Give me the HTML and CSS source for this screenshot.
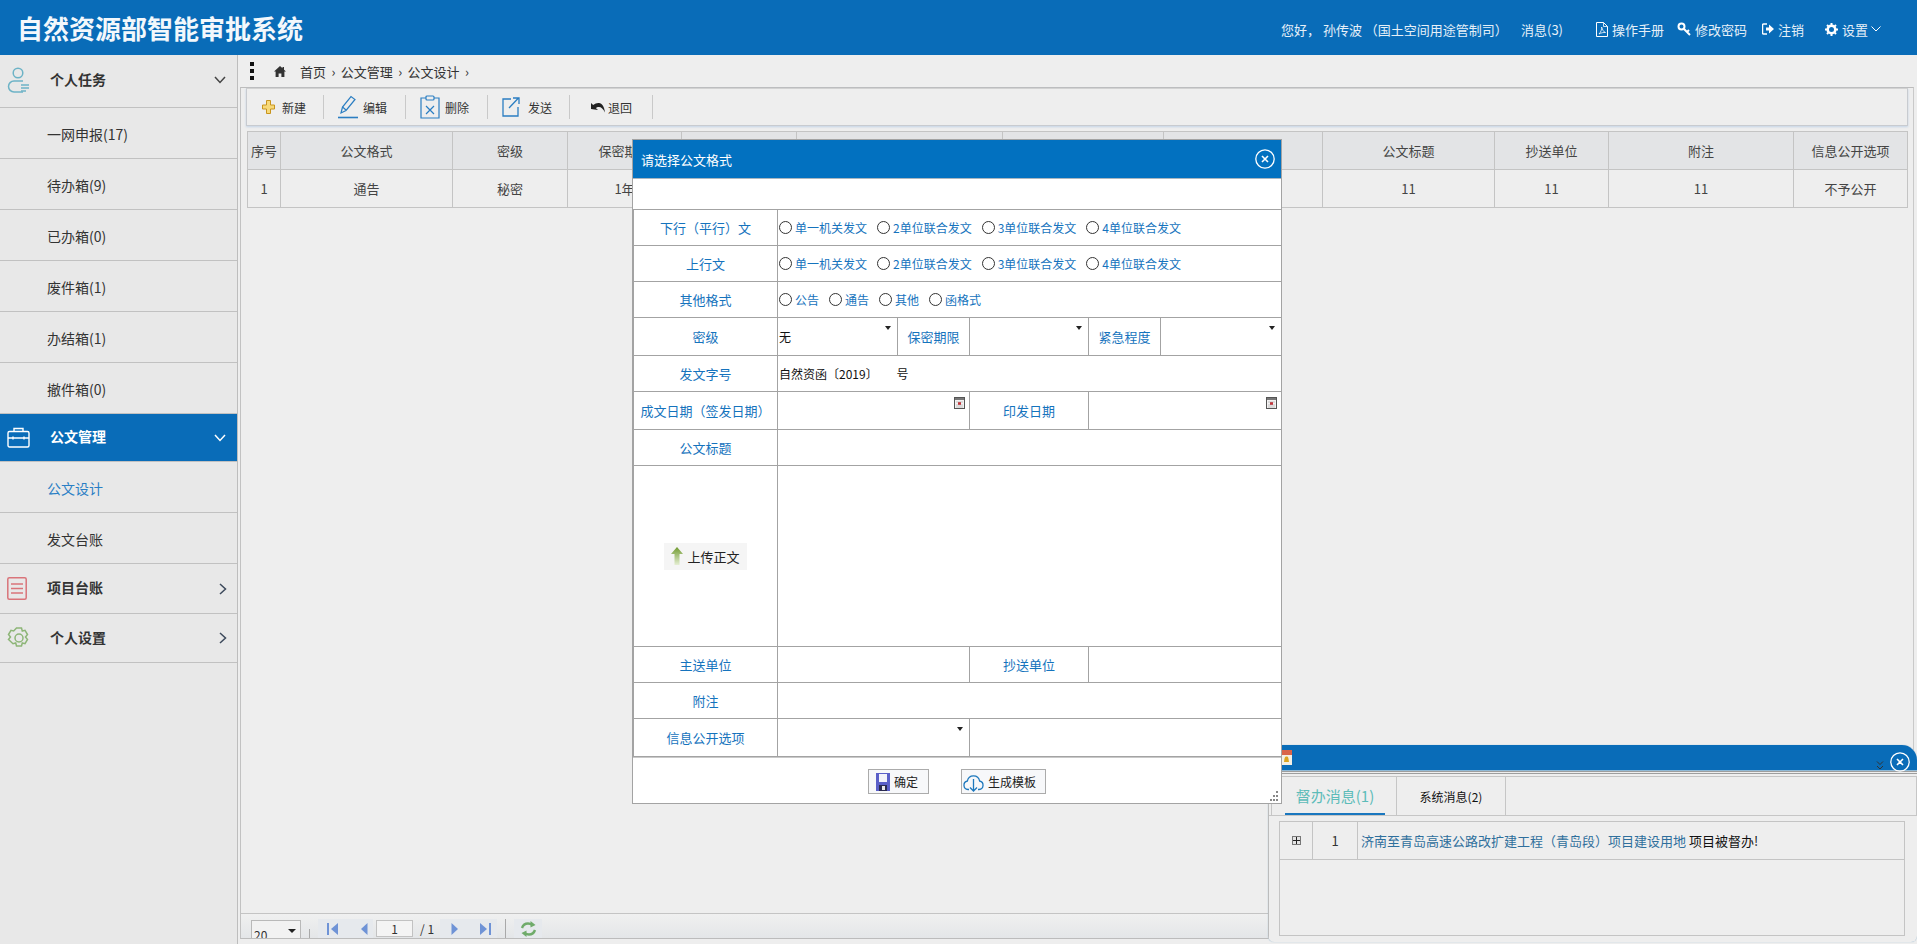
FILE: index.html
```html
<!DOCTYPE html>
<html lang="zh">
<head>
<meta charset="utf-8">
<title>自然资源部智能审批系统</title>
<link rel="stylesheet" href="styles.css">
</head>
<body>
<header class="top">
  <h1 class="brand">自然资源部智能审批系统</h1>
  <nav class="usernav">
    <span class="hello">您好， 孙传波 （国土空间用途管制司）</span>
    <span class="msg">消息(3)</span>
    <span class="nl nl-pdf"><svg width="12" height="15" viewBox="0 0 12 15" fill="none" stroke="#fff"><path d="M.5.5h7l4 4v10H.5z"/><path d="M7.5.5v4h4M3 12c2-2 3-5 2.6-7 1 3 2 5 3.900 5.500-2-.2-4.500.3-6.500 1.500z" stroke-width=".8"/></svg>操作手册</span>
    <span class="nl nl-key"><svg width="14" height="14" viewBox="0 0 14 14" fill="none" stroke="#fff" stroke-width="2"><circle cx="4.500" cy="4.500" r="3"/><path d="M7 7l6 6M10 10l2-2"/></svg>修改密码</span>
    <span class="nl nl-out"><svg width="12" height="12" viewBox="0 0 12 12"><path d="M5 1H1.500a1 1 0 0 0-1 1v8a1 1 0 0 0 1 1H5" fill="none" stroke="#fff" stroke-width="1.500"/><path d="M4 4.500h3V1.500L12 6l-5 4.500v-3H4z" fill="#fff"/></svg>注销</span>
    <span class="nl nl-set"><svg width="13" height="13" viewBox="0 0 13 13"><circle cx="6.500" cy="6.500" r="3.800" fill="none" stroke="#fff" stroke-width="2.600"/><path d="M6.500 0v13M0 6.500h13M2 2l9 9M11 2l-9 9" stroke="#fff" stroke-width="2" stroke-dasharray="2 9 2 0"/></svg>设置<svg class="caret" width="10" height="6" viewBox="0 0 10 6" fill="none" stroke="#fff"><path d="M.5.500L5 5l4.500-4.500"/></svg></span>
  </nav>
</header>

<div class="shell">
  <aside class="side">
    <div class="grp grp-first">
      <span class="gi"><svg width="24" height="26" viewBox="0 0 24 26" fill="none" stroke="#6db3c6" stroke-width="1.500"><circle cx="11" cy="6" r="4.800"/><path d="M16 14H7a5.500 5.500 0 0 0 0 11h9"/><path d="M14 18h8M14 21h8M14 24h5" stroke="#6db3c6"/></svg></span>
      <span class="gt">个人任务</span>
      <svg class="chev" width="12" height="8" viewBox="0 0 12 8" fill="none" stroke="#444" stroke-width="1.500"><path d="M1 1l5 5.500L11 1"/></svg>
    </div>
    <div class="sub">一网申报(17)</div>
    <div class="sub">待办箱(9)</div>
    <div class="sub">已办箱(0)</div>
    <div class="sub">废件箱(1)</div>
    <div class="sub">办结箱(1)</div>
    <div class="sub">撤件箱(0)</div>
    <div class="grp grp-on">
      <span class="gi"><svg width="23" height="21" viewBox="0 0 23 21" fill="none" stroke="#fff" stroke-width="1.400"><rect x="1" y="4.500" width="21" height="15.500" rx="1.500"/><path d="M7 4.500V1.500h9v3M1 11h21M6 9.500v3M17 9.500v3"/></svg></span>
      <span class="gt gt-shift">公文管理</span>
      <svg class="chev" width="12" height="8" viewBox="0 0 12 8" fill="none" stroke="#fff" stroke-width="1.500"><path d="M1 1l5 5.500L11 1"/></svg>
    </div>
    <div class="sub sub-on">公文设计</div>
    <div class="sub">发文台账</div>
    <div class="grp grp-s">
      <span class="gi"><svg width="20" height="23" viewBox="0 0 20 23" fill="none" stroke="#d9747a" stroke-width="1.500"><rect x=".8" y=".8" width="18.400" height="21.400" rx="1.500"/><path d="M4 7h12M4 11.500h12M4 16h12"/></svg></span>
      <span class="gt">项目台账</span>
      <svg class="chev-r" width="8" height="12" viewBox="0 0 8 12" fill="none" stroke="#3d4a5c" stroke-width="1.500"><path d="M1 1l5.500 5L1 11"/></svg>
    </div>
    <div class="grp grp-s2">
      <span class="gi"><svg width="24" height="22" viewBox="0 0 24 22" fill="none" stroke="#8db577" stroke-width="1.500"><circle cx="12" cy="11" r="4"/><path d="M9.500 1h5l.8 3 2.700-.7 2.500 4.200-2 2.500 2 2.500-2.500 4.200-2.700-.7-.8 3h-5l-.8-3-2.700.7L1.500 12.500l2-2.500-2-2.500L4 3.300l2.700.7z"/></svg></span>
      <span class="gt gt-shift">个人设置</span>
      <svg class="chev-r" width="8" height="12" viewBox="0 0 8 12" fill="none" stroke="#3d4a5c" stroke-width="1.500"><path d="M1 1l5.500 5L1 11"/></svg>
    </div>
  </aside>

  <main class="main">
    <div class="crumb">
      <span class="dots"><i></i><i></i><i></i></span>
      <svg class="home" width="12" height="11" viewBox="0 0 12 11"><path d="M6 0L0 5.500h1.600V11h3V7.500h2.800V11h3V5.500H12L10 3.700V1H8.500v1.300z" fill="#333"/></svg>
      <span class="path">首页 › 公文管理 › 公文设计 ›</span>
    </div>
    <section class="panel">
      <div class="tools">
        <span class="tb tb-new"><svg width="13" height="14" viewBox="0 0 13 14"><path d="M4.500.5h4v4.500H12.500v4H8.500v4.500h-4V9H.5V5h4z" fill="#f7d978" stroke="#c8941e"/></svg>新建</span>
        <span class="tb tb-edit"><svg width="20" height="24" viewBox="0 0 20 24" fill="none" stroke="#2b7ec2" stroke-width="1.200"><path d="M3 18l1.500-6L13 1.500l4 3L8 15.500z"/><path d="M4.500 12l3.500 3"/><path d="M0 22.500h20" stroke-width="1.600"/></svg>编辑</span>
        <span class="tb tb-del"><svg width="20" height="24" viewBox="0 0 20 24" fill="none" stroke="#2b7ec2" stroke-width="1.200"><path d="M6 3H1v20h18V3h-5"/><rect x="6" y="1" width="8" height="4" rx="1"/><path d="M6 11l8 8M14 11l-8 8"/></svg>删除</span>
        <span class="tb tb-send"><svg width="18" height="20" viewBox="0 0 18 20" fill="none" stroke="#2b7ec2" stroke-width="1.300"><path d="M9 2H1v17h15v-9"/><path d="M7 11l9-9.500M11 1h6v6"/></svg>发送</span>
        <span class="tb tb-back"><svg width="14" height="11" viewBox="0 0 14 11"><path d="M0 7V1l2.200 2C4 1.500 6 .8 8 1c3 .4 5 3 6 9.500C12.500 7 10 5 8 5c-1.500 0-2.500.5-3.200 1L7 8z" fill="#222"/></svg>退回</span>
      </div>
      <div class="grid-wrap">
        <table class="grid">
          <colgroup><col class="c1"><col class="c2"><col class="c3"><col class="c3b"><col class="c3"><col class="c6"><col class="c7"><col class="c8"><col class="c2"><col class="c3b"><col class="c11"><col class="c3b"></colgroup>
          <thead><tr><th>序号</th><th>公文格式</th><th>密级</th><th>保密期限</th><th>紧急程度</th><th>发文字号</th><th>成文日期</th><th>印发日期</th><th>公文标题</th><th>抄送单位</th><th>附注</th><th>信息公开选项</th></tr></thead>
          <tbody><tr><td>1</td><td>通告</td><td>秘密</td><td>1年</td><td></td><td></td><td></td><td></td><td>11</td><td>11</td><td>11</td><td>不予公开</td></tr></tbody>
        </table>
      </div>
      <div class="pager">
        <span class="psel"><span class="psel-v">20</span><i class="tri"></i></span>
        <span class="psep"></span>
        <span class="pgrp pgrp-a">
          <svg width="12" height="12" viewBox="0 0 12 12"><path d="M0 0h2v12H0z" fill="#6f93d6"/><path d="M11 0v12L4 6z" fill="#6f93d6"/></svg>
          <svg width="7" height="12" viewBox="0 0 7 12"><path d="M6.500 0v12L0 6z" fill="#6f93d6"/></svg>
        </span>
        <span class="pnum">1</span>
        <span class="pof">/ 1</span>
        <span class="pgrp pgrp-b">
          <svg width="7" height="12" viewBox="0 0 7 12"><path d="M.5 0v12L7 6z" fill="#6f93d6"/></svg>
          <svg width="12" height="12" viewBox="0 0 12 12"><path d="M10 0h2v12h-2z" fill="#6f93d6"/><path d="M1 0v12l7-6z" fill="#6f93d6"/></svg>
        </span>
        <span class="psep psep-b"></span>
        <span class="pgrp pgrp-c"><svg width="17" height="16" viewBox="0 0 17 16" fill="none" stroke="#6fab6a" stroke-width="2.400"><path d="M2 7c1-3 3.500-4.500 6-4.500 1.500 0 3 .4 4.500 1.500"/><path d="M15 9c-1 3-3.500 4.500-6 4.500-1.500 0-3-.4-4.500-1.500"/><path d="M10.500 0l5 4-5 2.500zM6.500 16l-5-4 5-2.500z" fill="#6fab6a" stroke="none"/></svg></span>
      </div>
    </section>
  </main>
</div>

<aside class="notify">
  <div class="n-head">
    <svg class="n-ico" width="11" height="15" viewBox="0 0 11 15"><rect width="11" height="5" fill="#d9644a"/><rect y="5" width="11" height="10" fill="#f4efe4"/><path d="M5.500 6.500c2 0 2 2 2.500 5.500H3c.5-3.500.5-5.500 2.500-5.500z" fill="#dba41f"/></svg>
    <svg class="n-dbl" width="8" height="9" viewBox="0 0 8 9" fill="none" stroke="#333"><path d="M1 .5l3 3 3-3M1 5l3 3 3-3"/></svg>
    <svg class="n-x" width="20" height="20" viewBox="0 0 20 20" fill="none" stroke="#fff" stroke-width="1.300"><circle cx="10" cy="10" r="9.200"/><path d="M7 7l6 6M13 7l-6 6" stroke-width="1.600"/></svg>
  </div>
  <div class="n-body">
    <div class="n-tabs"><span class="n-tab n-tab-on"><b>督办消息(1)</b></span><span class="n-tab">系统消息(2)</span></div>
    <div class="n-pane">
      <div class="n-row">
        <span class="n-c1"><i class="plus"></i></span>
        <span class="n-c2">1</span>
        <span class="n-c3"><span class="n-link">济南至青岛高速公路改扩建工程（青岛段）项目建设用地</span> 项目被督办!</span>
      </div>
    </div>
  </div>
</aside>

<section class="dlg">
  <div class="dlg-head">
    <span>请选择公文格式</span>
    <svg width="20" height="20" viewBox="0 0 20 20" fill="none" stroke="#fff" stroke-width="1.300"><circle cx="10" cy="10" r="9.200"/><path d="M7 7l6 6M13 7l-6 6" stroke-width="1.600"/></svg>
  </div>
  <div class="dlg-blank"></div>
  <table class="form">
    <colgroup><col class="f1"><col class="f2"><col class="f3"><col class="f4"><col class="f5"><col class="f6"></colgroup>
    <tr class="r36"><th>下行（平行）文</th><td colspan="5"><div class="opts">
      <label class="opt"><input type="radio" name="a">单一机关发文</label><label class="opt"><input type="radio" name="a">2单位联合发文</label><label class="opt"><input type="radio" name="a">3单位联合发文</label><label class="opt"><input type="radio" name="a">4单位联合发文</label></div></td></tr>
    <tr class="r36"><th>上行文</th><td colspan="5"><div class="opts">
      <label class="opt"><input type="radio" name="a">单一机关发文</label><label class="opt"><input type="radio" name="a">2单位联合发文</label><label class="opt"><input type="radio" name="a">3单位联合发文</label><label class="opt"><input type="radio" name="a">4单位联合发文</label></div></td></tr>
    <tr class="r36"><th>其他格式</th><td colspan="5"><div class="opts">
      <label class="opt"><input type="radio" name="a">公告</label><label class="opt"><input type="radio" name="a">通告</label><label class="opt"><input type="radio" name="a">其他</label><label class="opt"><input type="radio" name="a">函格式</label></div></td></tr>
    <tr class="r38"><th>密级</th><td class="val sel">无</td><th>保密期限</th><td class="sel"></td><th>紧急程度</th><td class="sel"></td></tr>
    <tr class="r36"><th>发文字号</th><td class="val" colspan="5">自然资函〔2019〕&nbsp;&nbsp;&nbsp;&nbsp;&nbsp;&nbsp;&nbsp;号</td></tr>
    <tr class="r38"><th>成文日期（签发日期）</th><td class="cal" colspan="2"><svg width="11" height="12" viewBox="0 0 11 12"><rect x=".5" y=".5" width="10" height="11" fill="#f3f1f1" stroke="#555"/><rect x="1" y="1" width="9" height="2" fill="#777"/><rect x="4" y="5" width="3" height="3" fill="#c8333a"/><path d="M2 5h7M2 8h7M2 10h7" stroke="#aaa" stroke-width=".6"/></svg></td><th>印发日期</th><td class="cal" colspan="2"><svg width="11" height="12" viewBox="0 0 11 12"><rect x=".5" y=".5" width="10" height="11" fill="#f3f1f1" stroke="#555"/><rect x="1" y="1" width="9" height="2" fill="#777"/><rect x="4" y="5" width="3" height="3" fill="#c8333a"/><path d="M2 5h7M2 8h7M2 10h7" stroke="#aaa" stroke-width=".6"/></svg></td></tr>
    <tr class="r36"><th>公文标题</th><td colspan="5"></td></tr>
    <tr class="r181"><th><span class="upload"><svg width="12" height="18" viewBox="0 0 12 18"><defs><linearGradient id="ug" x1="0" y1="0" x2="0" y2="1"><stop offset="0" stop-color="#6f9a2e"/><stop offset="1" stop-color="#e6efd4"/></linearGradient></defs><path d="M6 0l6 7H8.500v11h-5V7H0z" fill="url(#ug)"/></svg>上传正文</span></th><td colspan="5"></td></tr>
    <tr class="r36"><th>主送单位</th><td colspan="2"></td><th>抄送单位</th><td colspan="2"></td></tr>
    <tr class="r36"><th>附注</th><td colspan="5"></td></tr>
    <tr class="r38"><th>信息公开选项</th><td class="sel" colspan="2"></td><td colspan="3"></td></tr>
  </table>
  <div class="dlg-foot">
    <span class="btn btn-ok"><svg width="14" height="18" viewBox="0 0 14 18"><rect width="14" height="18" fill="#5a5fc8"/><rect x="3" y="1" width="8" height="8" fill="#f2f2fa"/><rect x="3" y="12" width="8" height="6" fill="#2a2a50"/><rect x="6" y="13" width="3" height="4" fill="#e8e8e8"/></svg>确定</span>
    <span class="btn btn-tpl"><svg width="21" height="21" viewBox="0 0 21 21" fill="none" stroke="#1d78bd" stroke-width="1.300"><path d="M6 18.500H5a4.300 4.300 0 0 1-.6-8.500 6.200 6.200 0 0 1 12.200 0 4.300 4.300 0 0 1-.6 8.500h-1"/><path d="M10.500 8v12M7 16.500l3.500 3.500 3.500-3.500"/></svg>生成模板</span>
    <svg class="grip" width="9" height="12" viewBox="0 0 9 12" fill="#888"><rect x="6" width="2" height="2"/><rect x="3" y="4" width="2" height="2"/><rect x="6" y="4" width="2" height="2"/><rect y="8" width="2" height="2"/><rect x="3" y="8" width="2" height="2"/><rect x="6" y="8" width="2" height="2"/></svg>
  </div>
</section>
</body>
</html>
```

FILE: styles.css
```css
* { box-sizing: border-box; }
html, body { margin: 0; height: 944px; overflow: hidden; }
body { position: relative; background: #eeeeee; color: #333; font-family: "Noto Sans CJK SC", "Liberation Sans", sans-serif; font-size: 13px; display: flex; flex-direction: column; }

.top { height: 55px; flex: none; background: #096cb8; display: flex; align-items: center; justify-content: space-between; color: #fff; }
.brand { margin: 0 0 0 17px; font-size: 26px; font-weight: 700; line-height: 34px; color: #f3f8fc; }
.usernav { display: flex; align-items: center; font-size: 13px; color: #e6f0f8; padding: 3px 36px 0 0; }
.hello { width: 240px; white-space: nowrap; }
.msg { width: 75px; }
.nl { display: inline-flex; align-items: center; gap: 4px; }
.nl-pdf { width: 81px; }
.nl-key { width: 85px; }
.nl-out { width: 63px; }
.caret { margin-left: -1px; }

.shell { flex: 1; display: flex; min-height: 0; }
.side { width: 238px; flex: none; background: #e8e8e8; border-right: 1px solid #bdbdbd; display: flex; flex-direction: column; }
.grp { height: 52px; display: flex; align-items: center; padding-left: 7px; border-bottom: 1px solid #c1c1c1; }
.grp-first { height: 53px; padding-bottom: 2px; }
.gi { width: 40px; flex: none; display: flex; }
.gt { flex: 1; font-size: 14px; font-weight: 700; color: #333; padding: 0 0 3px 3px; }
.gt-shift { padding-left: 3px; }
.chev { margin-right: 11px; }
.chev-r { margin-right: 10px; }
.sub { height: 51px; flex: none; display: flex; align-items: center; padding: 2px 0 0 47px; font-size: 14px; color: #333; border-bottom: 1px solid #c1c1c1; }
.sub-on { color: #2a7fc5; }
.grp-on { height: 48px; background: #096cb8; color: #fff; }
.grp-on .gt { color: #fff; }
.grp-s { height: 50px; }
.grp-s .gt { padding-left: 0; }
.grp-s2 { height: 49px; }

.main { flex: 1; min-width: 0; display: flex; flex-direction: column; padding: 0 3px 5px 2px; }
.crumb { height: 32px; flex: none; display: flex; align-items: center; padding-left: 10px; }
.dots { display: flex; flex-direction: column; gap: 3px; width: 24px; }
.dots i { width: 4px; height: 4px; background: #111; }
.home { margin-right: 14px; }
.path { font-size: 13px; color: #333; word-spacing: 2.500px; }

.panel { flex: 1; min-height: 0; border-top: 1px solid #bcbcbc; border-left: 1px solid #c2c2c2; border-right: 1px solid #c9c9c9; border-bottom: 1px solid #bcbcbc; display: flex; flex-direction: column; padding-left: 5px; }
.tools { height: 38px; flex: none; margin-right: 5px; border: 1px solid #c8cbd0; border-top-color: #d2d2d2; box-shadow: 0 1px 2px #c3d4e6; display: flex; align-items: center; font-size: 12px; color: #333; }
.tb { height: 24px; display: flex; align-items: center; border-right: 1px solid #c9c9c9; }
.tb-new { width: 77px; padding-left: 15px; gap: 7px; }
.tb-edit { width: 82px; padding-left: 14px; gap: 5px; }
.tb-del { width: 82px; padding-left: 14px; gap: 5px; }
.tb-send { width: 82px; padding-left: 14px; gap: 8px; }
.tb-back { width: 83px; padding-left: 21px; gap: 3px; }

.grid-wrap { flex: 1; min-height: 0; padding: 5px 0 0 1px; }
.grid { border-collapse: collapse; table-layout: fixed; width: 1660px; font-size: 13px; color: #444; }
.grid th, .grid td { height: 38px; border: 1px solid #c4c4c4; text-align: center; font-weight: 400; padding: 0; white-space: nowrap; overflow: hidden; }
.grid th { background: #e3e4e6; }
.c1 { width: 33px; } .c2 { width: 172px; } .c3 { width: 115px; } .c3b { width: 114px; }
.c6 { width: 206px; } .c7 { width: 161px; } .c8 { width: 159px; } .c11 { width: 185px; }

.pager { height: 25px; flex: none; margin-left: -5px; border-top: 1px solid #c4c4c4; background: linear-gradient(#f0f0f0, #e4e6e8); display: flex; align-items: flex-end; overflow: hidden; font-size: 12px; padding-left: 10px; }
.psel { width: 50px; height: 19px; flex: none; border: 1px solid #b9b9b9; background: #f2f2f2; position: relative; padding-left: 2px; line-height: 28px; margin-bottom: -1px; font-size: 12px; }
.tri { position: absolute; right: 4px; top: 8px; border: 4px solid transparent; border-top-color: #222; border-bottom: 0; }
.psep { width: 1px; height: 9px; background: #a9a9a9; margin: 0 8px; flex: none; }
.pgrp { height: 19px; display: flex; align-items: center; background: #e6e9ed; flex: none; }
.pgrp-a { width: 55px; padding-left: 9px; gap: 22px; }
.pnum { width: 37px; height: 17px; border: 1px solid #c2c2c2; background: #f4f4f4; margin-left: 3px; margin-bottom: 1px; text-align: center; line-height: 15px; color: #333; flex: none; }
.pof { width: 27px; padding-left: 7px; line-height: 19px; color: #333; flex: none; }
.pgrp-b { width: 57px; padding-left: 11px; gap: 21px; }
.psep-b { height: 19px; margin: 0 8px; }
.pgrp-c { width: 28px; justify-content: center; }

.notify { position: absolute; left: 1268px; top: 745px; right: 0; bottom: 2px; background: #eeeeee; border-radius: 15px 15px 6px 6px; box-shadow: 0 0 1px #7fa9c7; overflow: hidden; display: flex; flex-direction: column; }
.n-head { height: 26px; flex: none; background: #096cb8; position: relative; border-bottom: 1px solid #8fb9d6; }
.n-ico { position: absolute; left: 13px; top: 5px; }
.n-dbl { position: absolute; left: 608px; top: 16px; }
.n-x { position: absolute; left: 622px; top: 7px; }
.n-body { flex: 1; min-height: 0; padding-top: 2px; border-top: 3px double #9e9e9e; border-left: 1px solid #bcbcbc; display: flex; flex-direction: column; }
.n-tabs { height: 39px; flex: none; display: flex; border-top: 1px solid #c6c6c6; margin-left: 2px; border-left: 1px solid #c6c6c6; border-right: 1px solid #c6c6c6; }
.n-tab { width: 109px; border-right: 1px solid #c6c6c6; display: flex; align-items: center; justify-content: center; font-size: 12px; color: #111; }
.n-tab-on { width: 125px; color: #5dbcb9; font-size: 15px; }
.n-tab-on b { font-weight: 400; height: 100%; width: 100px; display: flex; align-items: center; justify-content: center; border-bottom: 2px solid #1977bf; margin-left: 2px; padding-top: 1px; }
.n-pane { flex: 1; min-height: 0; border-top: 1px solid #c6c6c6; padding: 5px 12px 6px 10px; }
.n-row { height: 100%; border: 1px solid #c4c4c4; display: flex; align-items: flex-start; font-size: 13px; }
.n-row > span { height: 38px; border-bottom: 1px solid #c4c4c4; display: flex; align-items: center; }
.n-c1 { width: 33px; justify-content: center; border-right: 1px solid #c4c4c4; }
.n-c2 { width: 45px; justify-content: center; border-right: 1px solid #c4c4c4; color: #333; }
.n-c3 { flex: 1; padding-left: 3px; white-space: pre; color: #111; }
.n-link { color: #2f6f9c; }
.plus { width: 9px; height: 9px; border: 1px solid #777; background: linear-gradient(90deg, transparent 3px, #222 3px, #222 4px, transparent 4px), linear-gradient(transparent 3px, #222 3px, #222 4px, transparent 4px), #e4e4e4; }

.dlg { position: absolute; left: 632px; top: 139px; width: 650px; height: 665px; background: #fff; border: 1px solid #a3a3a3; display: flex; flex-direction: column; }
.dlg-head { height: 39px; flex: none; background: #0271c0; border-bottom: 1px solid #a9b6c0; color: #fff; font-size: 13px; display: flex; align-items: center; justify-content: space-between; padding: 0 6px 0 8px; }
.dlg-blank { height: 30px; flex: none; }
.form { border-collapse: collapse; table-layout: fixed; width: 648px; font-size: 13px; background: #fff; }
.form th, .form td { border: 1px solid #a3a3a3; padding: 0; font-weight: 400; }
.form th { color: #1573bd; text-align: center; white-space: nowrap; }
.f1 { width: 144px; } .f2 { width: 120px; } .f3 { width: 72px; } .f4 { width: 119px; } .f5 { width: 72px; } .f6 { width: 121px; }
.r36 { height: 36px; } .r38 { height: 38px; } .r181 { height: 181px; }
.opts { display: flex; padding-left: 1px; }
.opt { display: inline-flex; align-items: center; margin-right: 10px; font-size: 12px; color: #1573bd; white-space: nowrap; }
.opt input { appearance: none; width: 13px; height: 13px; margin: 0 3px 0 0; border: 1px solid #333; border-radius: 50%; background: #fff; flex: none; }
.form .val { color: #111; font-size: 12px; padding-left: 1px; }
.sel, .cal { position: relative; }
.sel::after { content: ""; position: absolute; right: 6px; top: 8px; border: 3px solid transparent; border-width: 4px 3.500px 0; border-top-color: #222; }
.cal svg { position: absolute; right: 4px; top: 5px; }
.upload { display: inline-flex; align-items: center; gap: 4px; height: 27px; width: 83px; justify-content: center; background: #f5f5f5; color: #222; }
.dlg-foot { flex: 1; position: relative; display: flex; justify-content: center; padding: 11px 0 0; gap: 32px; border-top: 1px solid #c9c9c9; }
.btn { height: 25px; border: 1px solid #ababab; background: #f7f8fa; display: inline-flex; align-items: center; gap: 4px; font-size: 12px; color: #222; }
.btn-ok { width: 61px; padding-left: 7px; }
.btn-tpl { width: 85px; padding-left: 1px; }
.grip { position: absolute; right: 2px; bottom: 0; }
```
